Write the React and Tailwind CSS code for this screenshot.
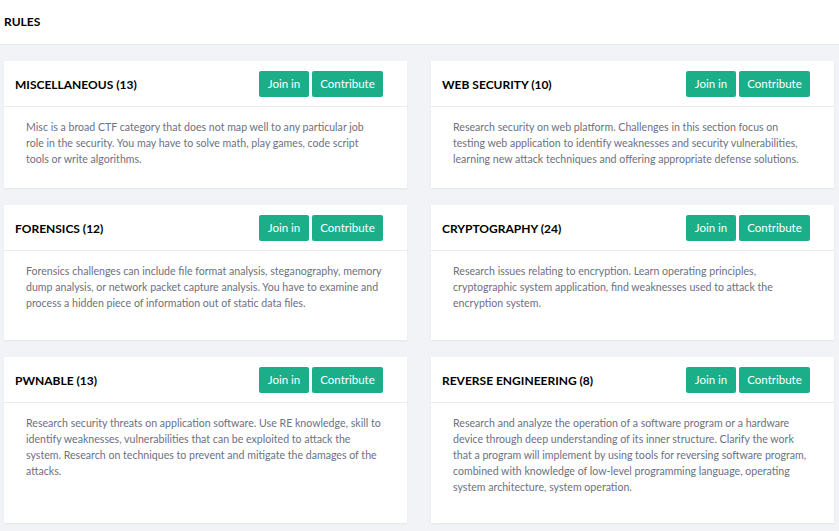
import React from "react";

const cards = [
  {
    title: "MISCELLANEOUS (13)",
    text: "Misc is a broad CTF category that does not map well to any particular job role in the security. You may have to solve math, play games, code script tools or write algorithms.",
    body: "h-[81px] pr-[30px]",
  },
  {
    title: "WEB SECURITY (10)",
    text: "Research security on web platform. Challenges in this section focus on testing web application to identify weaknesses and security vulnerabilities, learning new attack techniques and offering appropriate defense solutions.",
    body: "h-[81px] pr-[22px]",
  },
  {
    title: "FORENSICS (12)",
    text: "Forensics challenges can include file format analysis, steganography, memory dump analysis, or network packet capture analysis. You have to examine and process a hidden piece of information out of static data files.",
    body: "h-[89px] pr-[22px]",
  },
  {
    title: "CRYPTOGRAPHY (24)",
    text: "Research issues relating to encryption. Learn operating principles, cryptographic system application, find weaknesses used to attack the encryption system.",
    body: "h-[89px] pr-[22px]",
  },
  {
    title: "PWNABLE (13)",
    text: "Research security threats on application software. Use RE knowledge, skill to identify weaknesses, vulnerabilities that can be exploited to attack the system. Research on techniques to prevent and mitigate the damages of the attacks.",
    body: "h-[120px] pr-[22px]",
  },
  {
    title: "REVERSE ENGINEERING (8)",
    text: "Research and analyze the operation of a software program or a hardware device through deep understanding of its inner structure. Clarify the work that a program will implement by using tools for reversing software program, combined with knowledge of low-level programming language, operating system architecture, system operation.",
    body: "h-[120px] pr-[22px]",
  },
];

function Card({ c }) {
  return (
    <div className="bg-white shadow-[0_1px_2px_rgba(0,0,0,0.06)]">
      <div className="flex h-[46px] items-center justify-between border-b border-[#e9ecef] pl-[11px] pr-[24px]">
        <span className="pt-[2px] text-[12px] font-bold text-black">{c.title}</span>
        <div className="flex gap-[3px]">
          <button className="h-[26px] w-[50px] rounded-[2px] bg-[#1aaf89] text-[11.5px] text-white">Join in</button>
          <button className="h-[26px] w-[71px] rounded-[2px] bg-[#1aaf89] text-[11.5px] text-white">Contribute</button>
        </div>
      </div>
      <div className={`${c.body} pl-[22px] pt-[12px]`}>
        <p className="text-[10.6px] leading-[16px] text-[#6c717f]">{c.text}</p>
      </div>
    </div>
  );
}

export default function App() {
  return (
    <div className="min-h-[531px] bg-[#f1f3f7] font-['Lato',sans-serif]">
      <div className="flex h-[45px] items-center border-b border-[#e6e8ec] bg-white pl-[4px]">
        <span className="text-[12px] font-bold text-black">RULES</span>
      </div>
      <div className="grid grid-cols-[403px_403px] gap-x-[24px] gap-y-[17px] pl-[4px] pt-[16px]">
        {cards.map((c) => (
          <Card key={c.title} c={c} />
        ))}
      </div>
    </div>
  );
}
